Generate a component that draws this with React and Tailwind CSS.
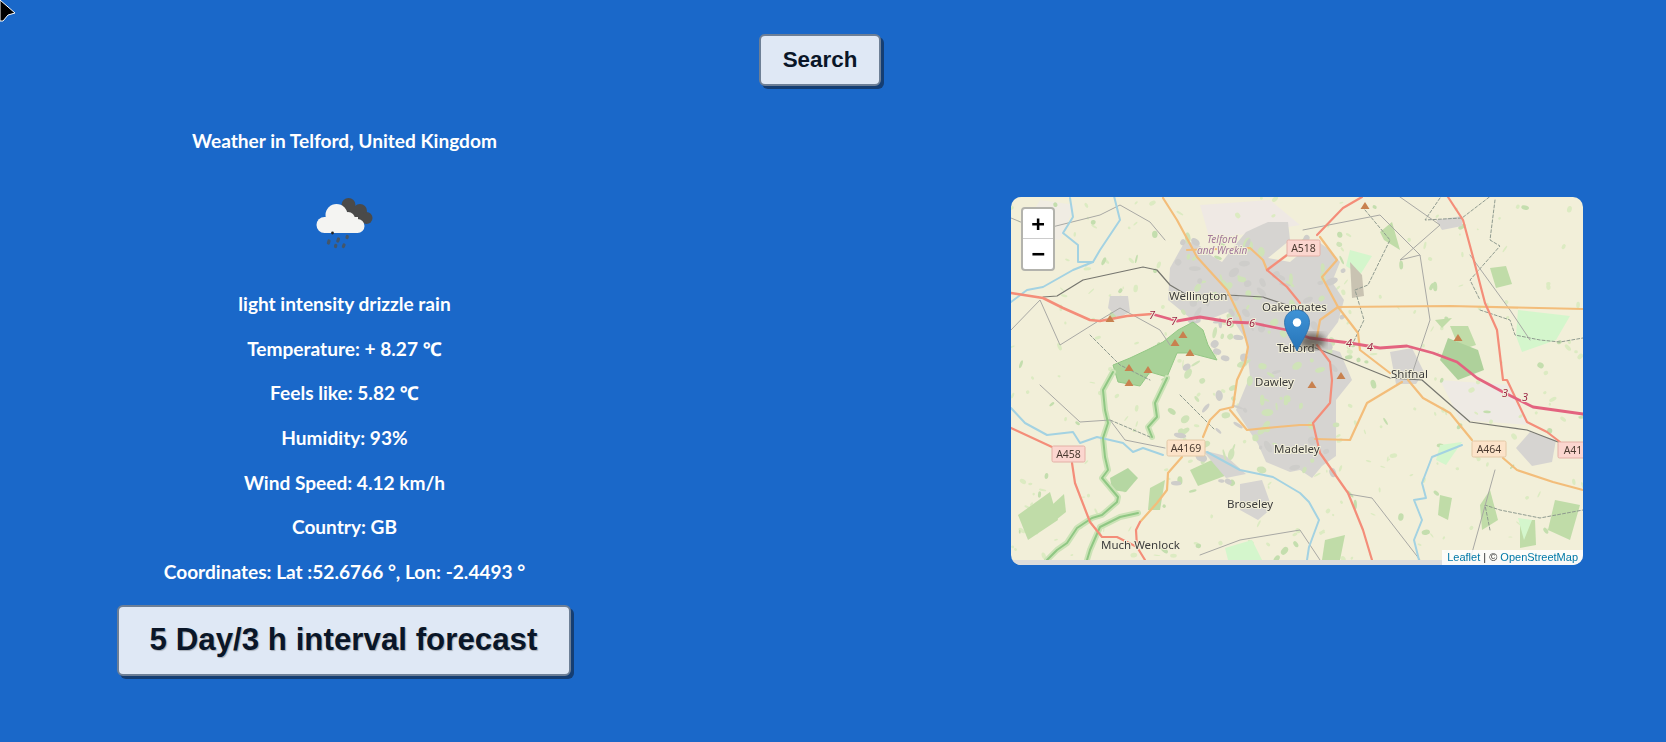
import React from "react";

const rows = [
  "light intensity drizzle rain",
  "Temperature: + 8.27 ℃",
  "Feels like: 5.82 ℃",
  "Humidity: 93%",
  "Wind Speed: 4.12 km/h",
  "Country: GB",
  "Coordinates: Lat :52.6766 °, Lon: -2.4493 °",
];

// built-up areas
const urban = [
  "M1170 268 L1180 250 L1186 240 L1200 246 L1212 256 L1222 262 L1236 244 L1246 232 L1268 222 L1288 222 L1290 240 L1268 258 L1290 262 L1316 240 L1330 250 L1340 262 L1332 282 L1344 300 L1338 322 L1320 346 L1340 352 L1352 380 L1336 400 L1336 456 L1322 466 L1312 478 L1300 470 L1290 472 L1266 462 L1258 444 L1250 432 L1236 410 L1250 376 L1246 340 L1228 312 L1208 320 L1190 318 L1168 300 Z",
  "M1390 352 L1412 348 L1424 372 L1416 384 L1396 384 Z",
  "M1530 432 L1556 440 L1552 462 L1532 466 L1516 448 Z",
  "M1110 296 L1128 296 L1130 312 L1118 318 L1108 308 Z",
  "M1202 450 L1226 456 L1246 474 L1226 478 Z",
  "M1240 484 L1262 480 L1272 508 L1258 520 L1240 510 Z",
  "M1436 220 L1462 216 L1462 226 L1442 230 Z",
];

// light green woods and fields
const woods = [
  "M1052 505 L1064 494 L1066 512 L1056 520 Z",
  "M1450 326 L1468 326 L1476 345 L1460 350 Z",
  "M1380 232 L1392 222 L1400 250 L1384 240 Z",
  "M1490 268 L1506 266 L1512 284 L1496 288 Z",
  "M1435 320 L1452 318 L1442 328 Z",
  "M1280 410 L1300 408 L1310 432 L1290 442 Z",
  "M1190 470 L1216 458 L1230 474 L1198 486 Z",
  "M1520 520 L1535 520 L1536 545 L1520 548 Z",
  "M1440 495 L1452 498 L1448 520 L1438 515 Z",
  "M1555 500 L1580 505 L1570 540 L1548 530 Z",
  "M1018 515 L1050 492 L1058 520 L1028 540 Z",
  "M1480 505 L1490 490 L1498 520 L1482 530 Z",
  "M1150 488 L1165 480 L1160 510 L1148 510 Z",
  "M1325 540 L1345 535 L1340 560 L1322 560 Z",
];

const mintPatches = [
  "M1518 310 L1570 316 L1556 340 L1522 352 L1516 336 Z",
  "M1440 445 L1462 442 L1446 465 L1436 460 Z",
  "M1225 548 L1252 540 L1262 560 L1228 560 Z",
  "M1518 518 L1532 520 L1524 540 Z",
  "M1350 250 L1372 256 L1360 275 L1346 266 Z",
];

const lines = {
  gray: [
    "M1011 218 L1040 230 L1100 215 L1120 205 L1150 222 L1165 240",
    "M1011 330 L1040 300 L1060 345 L1100 320 L1120 308 L1160 330 L1170 345",
    "M1040 385 L1080 422 L1110 420 L1125 440 L1165 448",
    "M1390 190 L1440 225 L1400 260 L1420 255 L1430 320 L1410 380",
    "M1303 230 L1380 215 L1420 255",
    "M1470 255 L1510 310 L1530 340",
    "M1348 494 L1372 498 L1420 560",
    "M1470 560 L1495 470",
    "M1200 555 L1240 540 L1300 530 L1320 560",
  ],
  trunk: [
    "M1011 428 L1052 447",
    "M1072 463 L1075 483 L1090 522 L1102 537 L1117 537 L1137 547 L1145 560",
    "M1137 547 L1136 530 L1140 522",
    "M1267 270 L1287 255",
    "M1267 270 L1287 287 L1300 303",
    "M1317 235 L1343 208 L1362 197",
    "M1448 197 L1463 220 L1473 257 L1485 303 L1497 330 L1503 380 L1507 380 L1527 422 L1547 432 L1560 442",
    "M1332 380 L1330 403 L1313 423 L1320 453 L1348 493 L1363 530 L1372 560",
    "M1317 345 L1330 362 L1332 380",
  ],
  primary: [
    "M1163 198 L1177 220 L1197 257 L1227 290 L1240 317 L1248 347 L1245 363 L1237 380 L1233 407 L1220 410 L1210 420 L1203 437",
    "M1182 457 L1168 473 L1167 490 L1157 503 L1140 522",
    "M1230 410 L1247 430 L1277 427 L1300 425 L1312 425",
    "M1187 250 L1250 248 L1263 260 L1267 270",
    "M1320 237 L1337 260 L1322 277 L1338 307 L1358 333 L1360 350 L1390 373",
    "M1338 307 L1450 306 L1583 309",
    "M1338 307 L1320 320 L1317 337",
    "M1408 380 L1423 398 L1450 413 L1472 440",
    "M1503 458 L1517 470 L1553 482 L1583 490",
    "M1402 382 L1367 403 L1350 440 L1315 439",
  ],
  rail: [
    "M1043 297 L1057 296 L1083 280 L1143 267 L1157 270 L1170 285 L1187 295 L1227 295 L1263 297 L1293 307",
    "M1313 347 L1353 363 L1390 378 L1422 380 L1470 422 L1527 430 L1558 442",
  ],
  river: [
    "M1011 408 L1025 423 L1047 435 L1073 432 L1080 443 L1097 437 L1123 443 L1133 452 L1143 448 L1163 455",
    "M1070 198 L1073 217 L1063 233 L1078 245 L1078 262 L1093 262 L1073 270 L1043 287 L1027 290 L1011 302",
    "M1207 452 L1240 470 L1273 477 L1300 493 L1309 502 L1319 520 L1309 547 L1307 560",
    "M1462 445 L1432 457 L1422 483 L1426 498 L1414 500 L1422 520 L1414 540 L1419 560",
    "M1113 192 L1120 220 L1100 250 L1093 262",
  ],
  forest: [
    "M1113 372 L1103 390 L1105 410 L1108 423 L1103 438 L1105 457 L1108 470 L1102 478 L1118 497 L1117 502 L1102 515 L1092 518 L1077 528 L1067 543 L1057 550 L1047 560",
    "M1138 513 L1120 517 L1100 527 L1090 550 L1087 560",
    "M1167 378 L1155 403 L1157 417 L1148 427 L1152 437",
  ],
  boundary: [
    "M1440 198 L1425 220 L1462 218 L1492 195",
    "M1495 200 L1490 240 L1500 246 L1470 280 L1480 300",
    "M1365 210 L1390 240 L1368 285 L1355 290 L1364 320 L1352 345",
    "M1480 310 L1510 320 L1515 335 L1540 340 L1560 342 L1583 338",
    "M1150 437 L1110 420",
    "M1180 395 L1215 430",
    "M1090 335 L1120 365 L1150 380",
    "M1490 530 L1485 505 L1500 510 L1540 518 L1583 510",
  ],
};

const peaks = [
  [1110, 319], [1183, 335], [1175, 343], [1190, 353], [1148, 370], [1129, 368], [1129, 383],
  [1365, 206], [1458, 338], [1312, 385], [1341, 376],
];

const shields = [
  { x: 1287, y: 240, w: 33, text: "A518", pink: true },
  { x: 1052, y: 446, w: 33, text: "A458", pink: true },
  { x: 1167, y: 440, w: 38, text: "A4169", pink: false },
  { x: 1472, y: 441, w: 34, text: "A464", pink: false },
  { x: 1558, y: 442, w: 30, text: "A41", pink: true },
];

const places = [
  { x: 1169, y: 300, text: "Wellington" },
  { x: 1262, y: 311, text: "Oakengates" },
  { x: 1277, y: 352, text: "Telford" },
  { x: 1255, y: 386, text: "Dawley" },
  { x: 1274, y: 453, text: "Madeley" },
  { x: 1227, y: 508, text: "Broseley" },
  { x: 1101, y: 549, text: "Much Wenlock" },
  { x: 1391, y: 378, text: "Shifnal" },
];

const refs = [
  [1152, 319, "7"], [1174, 325, "7"], [1229, 326, "6"], [1252, 327, "6"],
  [1349, 347, "4"], [1370, 351, "4"], [1505, 397, "3"], [1525, 401, "3"],
];

// small scattered fields, fixed seed so the picture never changes
function speckles(count, seed, x0, y0, w, h, minR, maxR) {
  let s = seed;
  const next = () => {
    s = (s * 16807) % 2147483647;
    return s / 2147483647;
  };
  return Array.from({ length: count }, () => ({
    x: x0 + next() * w,
    y: y0 + next() * h,
    rx: minR + next() * (maxR - minR),
    ry: minR * 0.6 + next() * (maxR - minR) * 0.6,
    a: next() * 180,
  }));
}

const fieldSpecks = speckles(260, 7321, 1011, 197, 572, 363, 1, 4);
const darkSpecks = speckles(70, 2231, 1011, 197, 572, 363, 1.5, 5);
const townGreen = speckles(90, 911, 1180, 232, 160, 240, 1.5, 6);
const townGray = speckles(60, 5147, 1176, 236, 170, 250, 2, 7);

function Specks({ items, fill }) {
  return items.map((p, i) => (
    <ellipse key={i} cx={p.x} cy={p.y} rx={p.rx} ry={p.ry} fill={fill} transform={`rotate(${p.a} ${p.x} ${p.y})`} />
  ));
}

function MapArt() {
  return (
    <svg viewBox="1011 197 572 368" className="block w-[572px] h-[368px]">
      <defs>
        <linearGradient id="pin" x1="0" y1="0" x2="0" y2="1">
          <stop offset="0" stopColor="#3f93d6" />
          <stop offset="1" stopColor="#2674b8" />
        </linearGradient>
        <filter id="soft"><feGaussianBlur stdDeviation="3" /></filter>
        <filter id="tile"><feGaussianBlur stdDeviation="0.45" /></filter>
      </defs>
      <rect x="1011" y="197" width="572" height="368" fill="#f2efd9" />
      <g filter="url(#tile)">
        <path d="M1200 205 L1270 200 L1300 225 L1240 235 L1210 240 Z" fill="#efe9e4" />
        <path d="M1040 200 L1075 205 L1060 240 L1020 235 Z" fill="#f0ece3" />
        <path d="M1440 380 L1510 385 L1530 425 L1460 420 Z" fill="#eeeae4" />
        <Specks items={fieldSpecks} fill="#dcebc2" />
        <Specks items={darkSpecks} fill="#c4deae" />
        {woods.map((d, i) => <path key={i} d={d} fill="#c0dca8" />)}
        {mintPatches.map((d, i) => <path key={i} d={d} fill="#d4f6cc" />)}
        {urban.map((d, i) => <path key={i} d={d} fill="#d6d4d1" />)}
        <Specks items={townGreen} fill="#cfe3b8" />
        <Specks items={townGray} fill="#cecdca" />
        <path d="M1113 365 L1130 358 L1147 350 L1163 342 L1178 330 L1193 322 L1203 330 L1208 345 L1217 360 L1190 353 L1177 353 L1167 377 L1150 372 L1140 386 L1118 382 Z" fill="#a9d298" stroke="#93c785" strokeWidth="1" />
        <path d="M1448 338 L1478 350 L1484 370 L1458 380 L1440 360 Z" fill="#aed19b" />
        <path d="M1350 262 L1362 275 L1364 296 L1352 298 Z" fill="#c9c3b2" />
        <path d="M1110 478 L1128 468 L1138 478 L1126 492 L1112 490 Z" fill="#b5d7a2" />
        <g fill="none" strokeLinejoin="round" strokeLinecap="round">
          {lines.forest.map((d, i) => <path key={i} d={d} stroke="#cbe3b6" strokeWidth="6" />)}
          {lines.boundary.map((d, i) => <path key={i} d={d} stroke="#8f9a8f" strokeWidth="1" strokeDasharray="3 2" />)}
          {lines.gray.map((d, i) => <path key={i} d={d} stroke="#a8a8a4" strokeWidth="1" />)}
          {lines.river.map((d, i) => <path key={i} d={d} stroke="#a3d2e2" strokeWidth="2" />)}
          {lines.forest.map((d, i) => <path key={i} d={d} stroke="#8fc783" strokeWidth="2" />)}
          {lines.rail.map((d, i) => <path key={i} d={d} stroke="#76766f" strokeWidth="1.2" />)}
          {lines.primary.map((d, i) => <path key={i} d={d} stroke="#f3bd7a" strokeWidth="2.2" />)}
          {lines.trunk.map((d, i) => <path key={i} d={d} stroke="#f48d79" strokeWidth="2.2" />)}
          <path d="M1011 293 L1043 298 L1063 308 L1090 320 L1100 321 L1127 316 L1152 314" stroke="#f48d79" strokeWidth="2.6" />
          <path d="M1152 314 L1177 321 L1200 317 L1230 322 L1253 323 L1287 330 L1310 338 L1350 343 L1380 348 L1407 346 L1433 353 L1457 362 L1477 378 L1503 392 L1533 407 L1583 414" stroke="#e3637f" strokeWidth="2.8" />
        </g>
      </g>
      {peaks.map(([x, y], i) => (
        <path key={i} d={`M${x} ${y - 4} L${x + 4.5} ${y + 3} L${x - 4.5} ${y + 3} Z`} fill="#c8814f" />
      ))}
      <rect x="1011" y="560" width="572" height="5" fill="#dcdcdc" />
      <g fontFamily="'Noto Sans', sans-serif" paintOrder="stroke" stroke="#f2efd9" strokeWidth="2">
        <text x="1207" y="243" fontSize="10" fontStyle="italic" fill="#a2779b">Telford</text>
        <text x="1197" y="254" fontSize="10" fontStyle="italic" fill="#a2779b">and Wrekin</text>
        {places.map((p) => (
          <text key={p.text} x={p.x} y={p.y} fontSize="11.5" fill="#3c3c3c">{p.text}</text>
        ))}
        {refs.map(([x, y, t], i) => (
          <text key={i} x={x} y={y} fontSize="11" fontStyle="italic" textAnchor="middle" fill="#9c2a48">{t}</text>
        ))}
      </g>
      {shields.map((s) => (
        <g key={s.text}>
          <rect x={s.x} y={s.y} width={s.w} height="16" rx="1.5" fill={s.pink ? "#fbd6cf" : "#fce3c9"} stroke={s.pink ? "#e3b0a6" : "#e3c8a6"} />
          <text x={s.x + s.w / 2} y={s.y + 12} fontSize="10.5" textAnchor="middle" fontFamily="'Noto Sans', sans-serif" fill="#4a3a30">{s.text}</text>
        </g>
      ))}
      <ellipse cx="1312" cy="341" rx="13" ry="8" fill="#3b3226" opacity="0.65" filter="url(#soft)" />
      <path d="M1297 351 C1293 342 1284.5 331 1284.5 322.5 C1284.5 315 1290 310 1297 310 C1304 310 1309.5 315 1309.5 322.5 C1309.5 331 1301 342 1297 351 Z" fill="url(#pin)" stroke="#2a6ca8" strokeWidth="0.8" />
      <circle cx="1297" cy="322.5" r="4.2" fill="#ffffff" />
    </svg>
  );
}

function WeatherIcon() {
  return (
    <svg viewBox="0 0 60 60" className="w-[60px] h-[60px]">
      {/* dark cloud behind */}
      <g fill="#4a4a4a">
        <circle cx="33.5" cy="12" r="7" />
        <circle cx="45" cy="18" r="7" />
        <circle cx="51.5" cy="25" r="6" />
        <rect x="32" y="14" width="16" height="14" />
      </g>
      {/* white cloud */}
      <g fill="#f4f4f2">
        <circle cx="21.5" cy="22" r="11" />
        <circle cx="9.5" cy="32" r="8" />
        <circle cx="33" cy="26" r="7" />
        <circle cx="42.5" cy="33" r="7" />
        <rect x="9" y="24" width="34" height="16" />
      </g>
      <g stroke="#43566a" strokeWidth="3.2" strokeLinecap="round">
        <path d="M14 48 L13.4 50" />
        <path d="M23.5 46 L22.8 48" />
        <path d="M32.3 43.5 L32 44.5" />
        <path d="M20.8 52.5 L20.5 53.5" />
        <path d="M29 52 L28.4 53.5" />
      </g>
      <circle cx="17.5" cy="40" r="1.4" fill="#222" />
    </svg>
  );
}

export default function App() {
  return (
    <div className="relative min-h-screen bg-[#1a68c9] font-['Lato','Noto_Sans',sans-serif] overflow-hidden">
      {/* cursor left in the capture */}
      <svg viewBox="0 0 20 24" className="absolute left-0 top-0 w-[20px] h-[24px]">
        <path d="M0 0 L15 13 L8 15 L3 21 L0 21 Z" fill="#000" stroke="#fff" strokeWidth="1" />
      </svg>

      <div className="flex justify-center pt-[34px] pr-[26px]">
        <button className="w-[122px] h-[52px] rounded-[6px] bg-[#dfe8f5] border-2 border-[#6d7f96] shadow-[3px_3px_0_#153e73] font-['Liberation_Sans',Arial,sans-serif] font-bold text-[22.4px] text-[#0a1628]">
          Search
        </button>
      </div>

      <div className="flex items-start mt-[33px]">
        <section className="w-[689px] flex flex-col items-center text-white font-bold text-[19.1px]">
          <h2 className="h-[45px] flex items-center">Weather in Telford, United Kingdom</h2>
          <div className="mt-[29px] mb-[29px]">
            <WeatherIcon />
          </div>
          {rows.map((row) => (
            <p key={row} className="h-[44.7px] flex items-center">{row}</p>
          ))}
          <button className="mt-[10px] mr-[2px] w-[454px] h-[71px] rounded-[6px] bg-[#dfe8f5] border-2 border-[#6d7f96] shadow-[3px_3px_0_#153e73] font-['Liberation_Sans',Arial,sans-serif] font-bold text-[31.3px] text-[#0a1628] [text-shadow:1px_1px_1px_rgba(0,0,0,0.25)]">
            5 Day/3 h interval forecast
          </button>
        </section>

        <div className="relative mt-[78px] ml-[322px] w-[572px] h-[368px] rounded-[10px] overflow-hidden">
          <MapArt />
          <div className="absolute left-[10px] top-[10px] w-[34px] rounded-[4px] border-2 border-[#b3b3ad] bg-white overflow-hidden font-['DejaVu_Sans_Mono',monospace] font-bold text-[22px] text-black text-center leading-[30px]">
            <div className="h-[30px] border-b border-[#cccccc]">+</div>
            <div className="h-[30px]">−</div>
          </div>
          <div className="absolute right-0 bottom-0 h-[15px] px-[5px] bg-white/80 font-['Liberation_Sans',Arial,sans-serif] text-[11px] leading-[15px] text-[#333333]">
            <span className="text-[#0078a8]">Leaflet</span> | © <span className="text-[#0078a8]">OpenStreetMap</span>
          </div>
        </div>
      </div>
    </div>
  );
}
